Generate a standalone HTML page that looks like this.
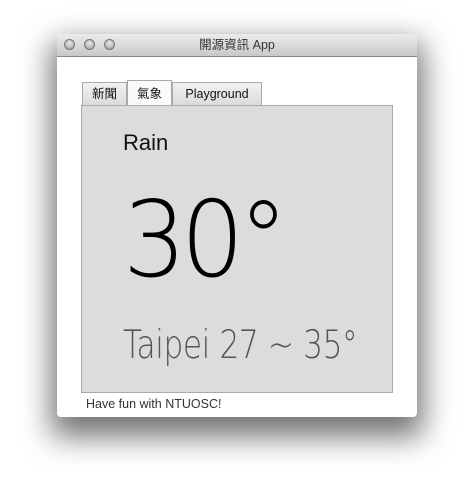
<!DOCTYPE html>
<html><head><meta charset="utf-8"><style>
body{margin:0;width:474px;height:496px;background:#fff;position:relative;overflow:hidden;font-family:"Liberation Sans","Noto Sans CJK TC",sans-serif}
.win{position:absolute;left:57px;top:34px;width:360px;height:383px;background:#fff;border-radius:4px;box-shadow:0 14px 30px 6px rgba(0,0,0,.55);overflow:hidden}
.title{height:22px;background:linear-gradient(#ececec,#c8c8c8);border-bottom:1px solid #8a8a8a;text-align:center;font-size:12.5px;line-height:22px;color:#333}
.dot{position:absolute;top:5px;width:11px;height:11px;border-radius:50%;background:radial-gradient(circle at 50% 35%,#e8e8e8,#9a9a9a);border:1px solid #777;box-sizing:border-box}
.tab{position:absolute;top:48px;height:23px;background:linear-gradient(#f2f2f2,#dcdcdc);border:1px solid #aaa;border-bottom:none;box-sizing:border-box;font-size:12.5px;line-height:23px;text-align:center;color:#111}
.panel{position:absolute;left:24px;top:71px;width:312px;height:288px;background:#dcdcdc;border:1px solid #aaa;box-sizing:border-box}
.t{position:absolute;left:66px;white-space:nowrap}
.thin{font-family:'DejaVu Sans','Liberation Sans',sans-serif;font-weight:200;transform-origin:left}
</style></head><body>
<div class="win">
<div class="title">開源資訊 App</div>
<div class="dot" style="left:7px"></div><div class="dot" style="left:27px"></div><div class="dot" style="left:47px"></div>
<div class="tab" style="left:25px;width:45px">新聞</div>
<div class="tab" style="left:70px;width:45px;background:#fafafa;top:46px;height:25px;line-height:27px">氣象</div>
<div class="tab" style="left:115px;width:90px">Playground</div>
<div class="panel"></div>
<div class="t" style="top:96px;font-size:22px;color:#111">Rain</div>
<div class="t thin" style="top:154px;font-size:105px;line-height:105px;letter-spacing:-6px;color:#000;transform:scaleX(0.95)">30°</div>
<div class="t thin" style="top:292px;font-size:39px;line-height:39px;letter-spacing:-0.5px;color:#555;transform:scaleX(0.8)">Taipei 27 ~ 35°</div>
<div class="t" style="left:29px;top:363px;font-size:12.5px;color:#333">Have fun with NTUOSC!</div>
</div>
</body></html>
